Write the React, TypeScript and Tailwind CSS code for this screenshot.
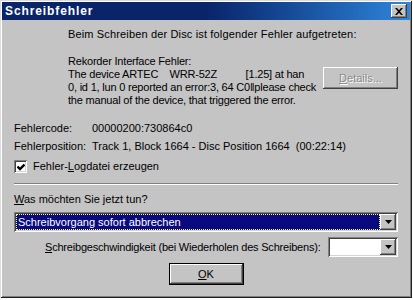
import { useState } from 'react';

const font = "font-['Liberation_Sans',Arial,sans-serif]";

// classic 3D edges
const raised = 'shadow-[inset_-1px_-1px_#404040,inset_1px_1px_#ffffff,inset_-2px_-2px_#808080]';
const sunken = 'shadow-[inset_1px_1px_#808080,inset_-1px_-1px_#ffffff,inset_2px_2px_#404040,inset_-2px_-2px_#d4d4d4]';

const ArrowButton = () => (
  <div className={`w-[16px] h-[16px] bg-[#c4c4c4] flex items-center justify-center ${raised}`}>
    <svg width="7" height="4" viewBox="0 0 7 4">
      <path d="M0 0h7L3.5 4z" fill="#000" />
    </svg>
  </div>
);

const Check = () => (
  <div className={`w-[13px] h-[13px] bg-white flex items-center justify-center ${sunken}`}>
    <svg width="8" height="8" viewBox="0 0 8 8">
      <path d="M0.5 3.5l2.5 2.5 4.5-4.5" stroke="#000" strokeWidth="2.4" fill="none" />
    </svg>
  </div>
);

export default function App() {
  const [log, setLog] = useState(true);

  return (
    <div className={`w-[413px] h-[300px] bg-white ${font} text-[11px] leading-[13px] text-black`}>
      <div className="w-[412px] h-[298px] bg-[#c4c4c4] flex flex-col shadow-[inset_1px_1px_#dcdcdc,inset_-1px_-1px_#202020,inset_2px_2px_#ffffff,inset_-2px_-2px_#808080]">
        {/* title bar */}
        <div className="mx-[2px] mt-[2px] h-[18px] bg-gradient-to-r from-[#0a246a] via-[#0a246a] to-[#2f86dc] flex items-center justify-between pl-[3px] pr-[3px]">
          <span className="text-white font-bold text-[12px] tracking-[0.9px]">Schreibfehler</span>
          <div className={`w-[16px] h-[14px] bg-[#c4c4c4] flex items-center justify-center ${raised}`}>
            <svg width="8" height="7" viewBox="0 0 8 7">
              <path d="M0 0h2l2 2.2L6 0h2L5 3.5 8 7H6L4 4.8 2 7H0l3-3.5z" fill="#000" />
            </svg>
          </div>
        </div>

        <div className="pl-[68px] mt-[8px] tracking-[0.15px]">Beim Schreiben der Disc ist folgender Fehler aufgetreten:</div>

        <div className="flex mt-[14px] pl-[68px] pr-[14px]">
          <div className="flex-1 whitespace-pre tracking-[-0.2px]">
            {'Rekorder Interface Fehler:\nThe device ARTEC    WRR-52Z          [1.25] at han\n0, id 1, lun 0 reported an error:3, 64 C0\u2016please check\nthe manual of the device, that triggered the error.'}
          </div>
          <div className={`mt-[12px] w-[75px] h-[22px] bg-[#c4c4c4] flex items-center justify-center ${raised}`}>
            <span className="text-[#8a8a8a] [text-shadow:1px_1px_#ffffff]">
              <span className="underline">D</span>etails...
            </span>
          </div>
        </div>

        <div className="flex mt-[15px] pl-[14px]">
          <span className="w-[78px]">Fehlercode:</span>
          <span>00000200:730864c0</span>
        </div>
        <div className="flex mt-[5px] pl-[14px]">
          <span className="w-[78px]">Fehlerposition:</span>
          <span className="whitespace-pre">Track 1, Block 1664 - Disc Position 1664  (00:22:14)</span>
        </div>

        <label className="flex items-center gap-[6px] mt-[7px] pl-[14px] cursor-default" onClick={() => setLog(!log)}>
          {log ? <Check /> : <div className={`w-[13px] h-[13px] bg-white ${sunken}`} />}
          <span>Fehler-<span className="underline">L</span>ogdatei erzeugen</span>
        </label>

        <div className="mx-[14px] mt-[10px] border-t border-t-[#808080] border-b border-b-white" />

        <div className="mt-[8px] pl-[14px]">
          <span className="underline">W</span>as möchten Sie jetzt tun?
        </div>

        <div className={`mx-[14px] mt-[6px] h-[20px] bg-white flex items-center p-[2px] ${sunken}`}>
          <div className="flex-1 h-full bg-[#0a0a80] text-white flex items-center pl-[2px] outline-1 outline-dotted outline-[#ffff80] -outline-offset-1">
            Schreibvorgang sofort abbrechen
          </div>
          <ArrowButton />
        </div>

        <div className="flex items-center mt-[5px] pl-[45px] pr-[14px]">
          <span className="whitespace-nowrap tracking-[-0.2px]">
            <span className="underline">S</span>chreibgeschwindigkeit (bei Wiederholen des Schreibens):
          </span>
          <div className={`ml-auto shrink-0 w-[70px] h-[20px] bg-white flex items-center justify-end p-[2px] ${sunken}`}>
            <ArrowButton />
          </div>
        </div>

        <div className="flex justify-center mt-[6px]">
          <div className="w-[75px] h-[22px] bg-black p-px">
            <div className={`w-full h-full bg-[#c4c4c4] flex items-center justify-center ${raised}`}>
              <span><span className="underline">O</span>K</span>
            </div>
          </div>
        </div>
      </div>
    </div>
  );
}
